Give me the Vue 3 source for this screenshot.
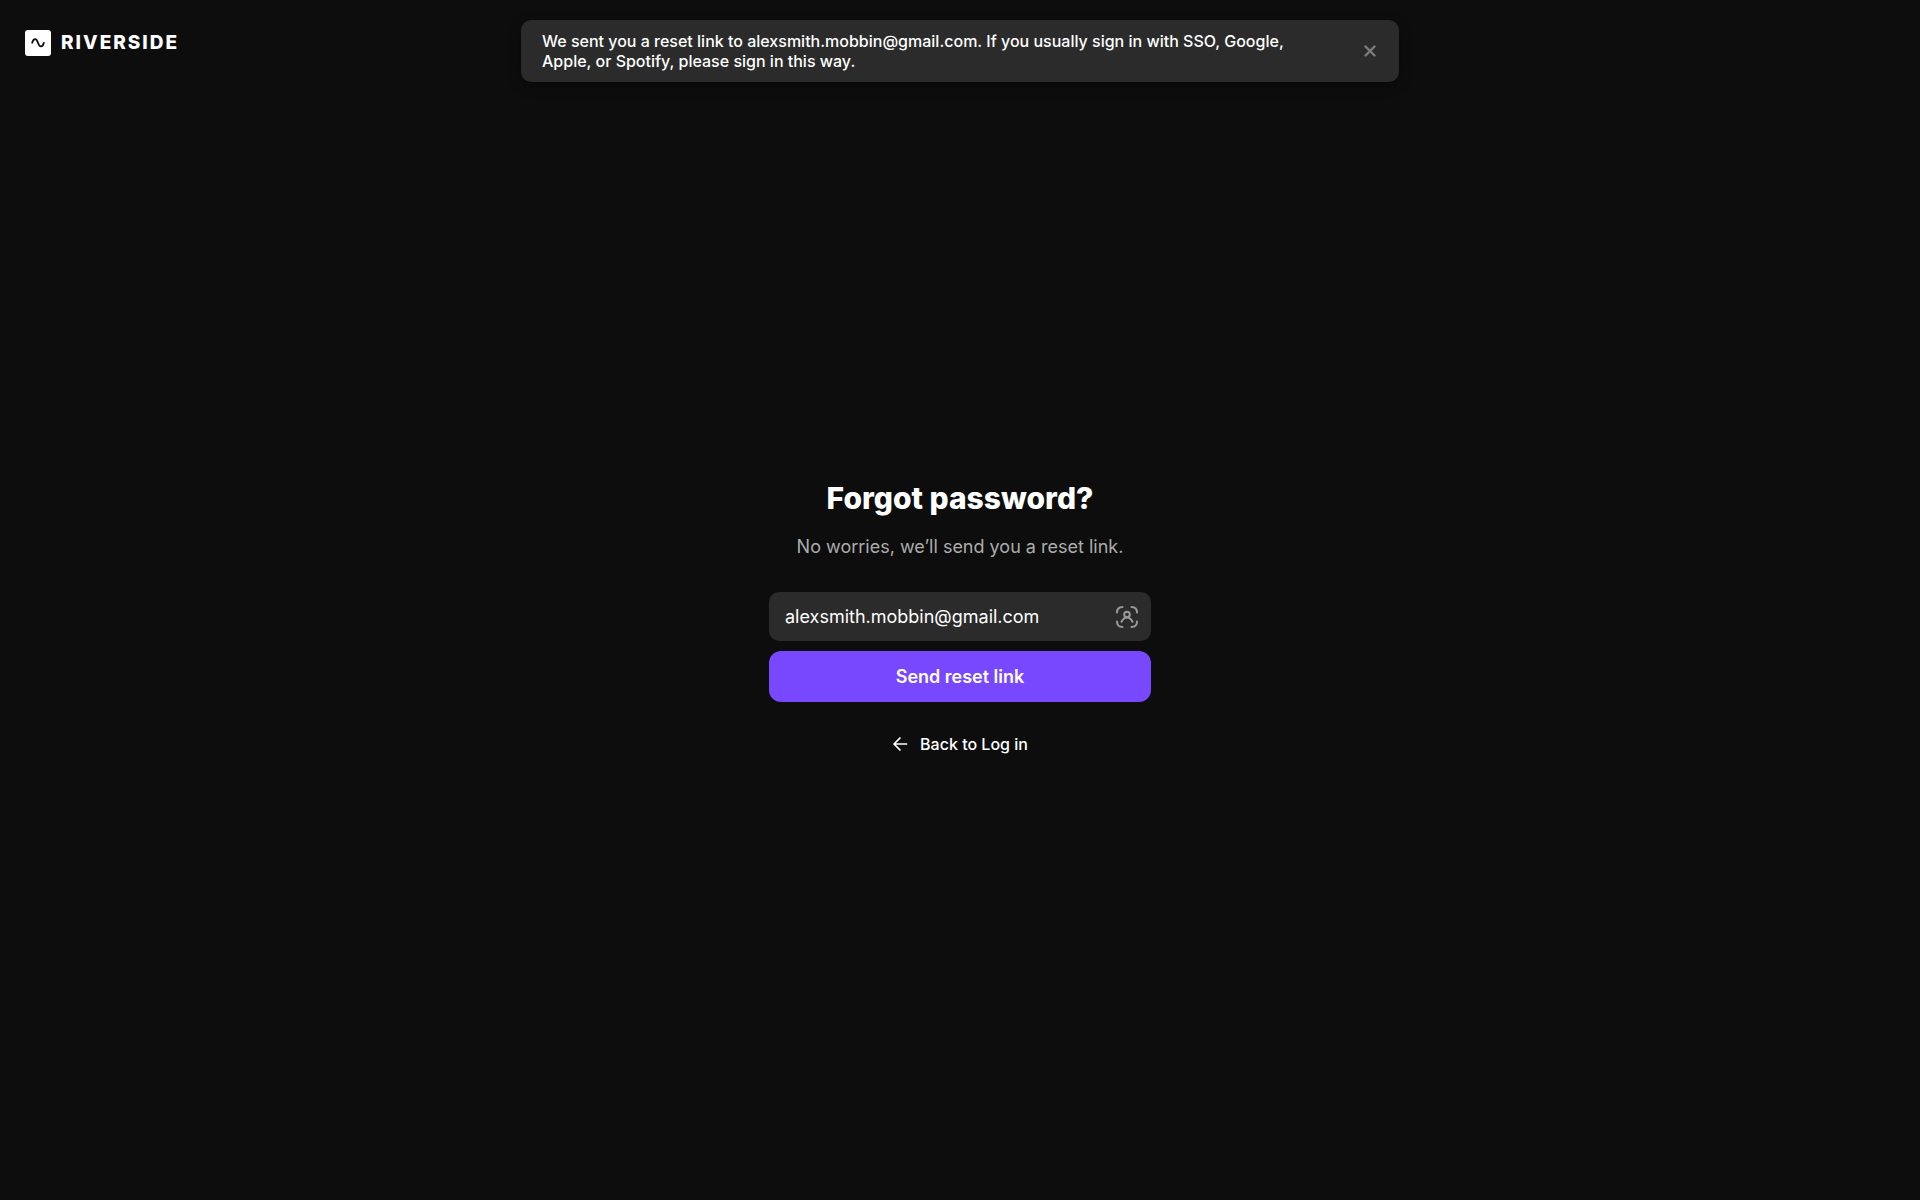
<script setup>
import { ref } from 'vue'

const email = ref('alexsmith.mobbin@gmail.com')
const noticeOpen = ref(true)
</script>

<template>
  <div class="page">
    <header class="header">
      <a class="brand" href="#" aria-label="Riverside home">
        <svg class="brand-mark" viewBox="0 0 26 26" aria-hidden="true">
          <rect width="26" height="26" rx="3" fill="#fff" />
          <path
            d="M7.2 12.8C7.8 10.6 8.8 9.2 10.2 9.2c3 0 2.500 7.200 5.700 7.200 1.500 0 2.400-1.300 2.900-3.600"
            fill="none"
            stroke="#0d0d0d"
            stroke-width="1.8"
            stroke-linecap="round"
          />
        </svg>
        <span class="brand-name">RIVERSIDE</span>
      </a>
    </header>

    <div v-if="noticeOpen" class="notice" role="status">
      <p class="notice-text">
        We sent you a reset link to alexsmith.mobbin@gmail.com. If you usually sign in with SSO,
        Google, Apple, or Spotify, please sign in this way.
      </p>
      <button class="notice-close" type="button" aria-label="Dismiss" @click="noticeOpen = false">
        <svg viewBox="0 0 12 12" aria-hidden="true">
          <path d="M1.5 1.5l9 9M10.5 1.5l-9 9" fill="none" stroke="currentColor" stroke-width="2.4" stroke-linecap="round" />
        </svg>
      </button>
    </div>

    <main class="main">
      <form class="form" @submit.prevent>
        <h1 class="title">Forgot password?</h1>
        <p class="subtitle">No worries, we’ll send you a reset link.</p>
        <div class="field">
          <input v-model="email" class="input" type="email" aria-label="Email" />
          <svg class="field-icon" viewBox="0 0 24 24" aria-hidden="true">
            <g fill="none" stroke="currentColor" stroke-width="2" stroke-linecap="round">
              <path d="M2 7.5Q2 2 7.5 2M16.5 2Q22 2 22 7.5M22 16.5q0 5.5-5.5 5.5M7.5 22Q2 22 2 16.5" />
              <circle cx="12" cy="9.5" r="2.8" />
              <path d="M6.5 16.8c1.400-2.800 3.200-4.200 5.500-4.200s4.100 1.400 5.500 4.200" />
            </g>
          </svg>
        </div>
        <button class="submit" type="submit">Send reset link</button>
        <a class="back" href="#">
          <svg class="back-icon" viewBox="0 0 16 16" aria-hidden="true">
            <path d="M14.5 8H2M8 2L2 8l6 6" fill="none" stroke="currentColor" stroke-width="1.7" stroke-linecap="round" stroke-linejoin="round" />
          </svg>
          <span>Back to Log in</span>
        </a>
      </form>
    </main>
  </div>
</template>

<style>
body {
  margin: 0;
  background: #0d0d0d;
}
</style>

<style scoped>
.page {
  display: flex;
  flex-direction: column;
  min-height: 100vh;
  background: #0d0d0d;
  color: #fff;
  font-family: Inter, sans-serif;
}

.header {
  display: flex;
  padding: 30px 25px;
}

.brand {
  display: flex;
  align-items: center;
  gap: 10px;
  color: inherit;
  text-decoration: none;
}

.brand-mark {
  width: 26px;
  height: 26px;
}

.brand-name {
  font-size: 19px;
  font-weight: 800;
  line-height: 26px;
  letter-spacing: 2px;
}

.notice {
  position: absolute;
  top: 20px;
  left: 50%;
  display: flex;
  align-items: center;
  justify-content: space-between;
  gap: 40px;
  box-sizing: border-box;
  width: 878px;
  max-width: calc(100% - 40px);
  padding: 11px 21px;
  border-radius: 10px;
  background: #2b2b2b;
  box-shadow: 0 4px 12px rgba(0, 0, 0, 0.4);
  transform: translateX(-50%);
}

.notice-text {
  max-width: 780px;
  margin: 0;
  font-size: 16px;
  font-weight: 500;
  line-height: 20px;
}

.notice-close {
  display: flex;
  padding: 2px;
  border: 0;
  background: none;
  color: #7c7c7c;
  cursor: pointer;
}

.notice-close svg {
  width: 12px;
  height: 12px;
}

.main {
  display: flex;
  flex: 1;
  align-items: center;
  justify-content: center;
  padding: 0 20px 52px;
}

.form {
  display: flex;
  flex-direction: column;
  width: 100%;
  max-width: 382px;
}

.title {
  margin: 0;
  font-size: 30px;
  font-weight: 800;
  line-height: 40px;
  text-align: center;
}

.subtitle {
  margin: 17px 0 33px;
  color: #acacac;
  font-size: 18px;
  line-height: 24px;
  text-align: center;
}

.field {
  display: flex;
  align-items: center;
  box-sizing: border-box;
  height: 49px;
  padding: 0 12px 0 16px;
  border-radius: 10px;
  background: #2b2b2b;
}

.input {
  flex: 1;
  min-width: 0;
  padding: 0;
  border: 0;
  outline: 0;
  background: none;
  color: #fff;
  font-family: inherit;
  font-size: 18px;
  line-height: 24px;
}

.field-icon {
  width: 24px;
  height: 24px;
  color: #9a9a9a;
}

.submit {
  height: 51px;
  margin: 10px 0 30px;
  padding: 0;
  border: 0;
  border-radius: 12px;
  background: #7848ff;
  color: #fff;
  font-family: inherit;
  font-size: 18px;
  font-weight: 600;
  cursor: pointer;
}

.back {
  display: flex;
  align-items: center;
  align-self: center;
  gap: 12px;
  color: #fff;
  font-size: 16px;
  font-weight: 500;
  line-height: 24px;
  text-decoration: none;
}

.back-icon {
  width: 16px;
  height: 16px;
}
</style>
